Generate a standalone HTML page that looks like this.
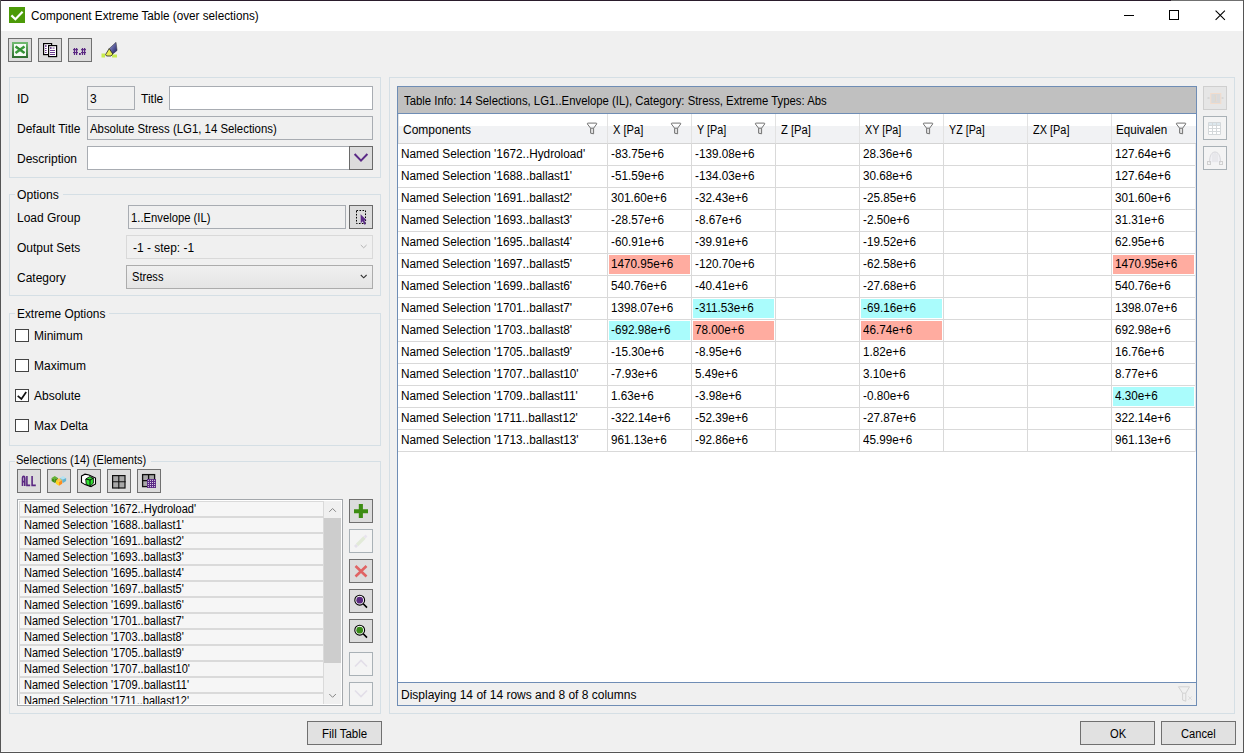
<!DOCTYPE html>
<html><head><meta charset="utf-8"><style>
html,body{margin:0;padding:0;width:1244px;height:753px;overflow:hidden;background:#f0f0f0}
body div{position:absolute}
.t{font-family:"Liberation Sans",sans-serif;line-height:16px;white-space:nowrap;color:#000}
</style></head><body>
<div style="left:0px;top:0px;width:1244px;height:753px;background:#f0f0f0"></div>
<div style="left:1px;top:1px;width:1242px;height:30px;background:#fff"></div>
<div style="left:0px;top:0px;width:1171px;height:1px;background:#2a1c2c"></div>
<div style="left:1171px;top:0px;width:73px;height:1px;background:#707070"></div>
<div style="left:0px;top:0px;width:1px;height:753px;background:#555"></div>
<div style="left:1243px;top:0px;width:1px;height:753px;background:#555"></div>
<div style="left:0px;top:752px;width:1244px;height:1px;background:#555"></div>
<div style="left:1px;top:751px;width:1242px;height:1px;background:#f8f8f8"></div>
<svg style="position:absolute;left:9px;top:7px" width="16" height="16" viewBox="0 0 16 16"><rect width="16" height="16" fill="#4c9a08"/><path d="M2.4 8.4 L6.4 12.3 L13.6 4.8" stroke="#fff" stroke-width="2.2" fill="none"/></svg>
<div class="t" style="left:30.50px;top:8px;font-size:12px;transform:scaleX(0.9764);transform-origin:0 0;">Component Extreme Table (over selections)</div>
<div style="left:1124px;top:15px;width:10px;height:1px;background:#000"></div>
<div style="left:1169px;top:10px;width:10px;height:10px;border:1px solid #000;box-sizing:border-box"></div>
<svg style="position:absolute;left:1215px;top:10px" width="11" height="11" viewBox="0 0 11 11"><path d="M0.6 0.6 L9.9 9.9 M9.9 0.6 L0.6 9.9" stroke="#000" stroke-width="1.1"/></svg>
<div style="left:8px;top:38px;width:24px;height:24px;background:#dcdcdc;border:1px solid #707070;box-sizing:border-box"></div>
<div style="left:38px;top:38px;width:24px;height:24px;background:#dcdcdc;border:1px solid #707070;box-sizing:border-box"></div>
<div style="left:68px;top:38px;width:24px;height:24px;background:#dcdcdc;border:1px solid #707070;box-sizing:border-box"></div>
<svg style="position:absolute;left:8px;top:38px" width="24" height="24" viewBox="0 0 24 24"><defs><linearGradient id="xg" x1="0" y1="0" x2="0" y2="1"><stop offset="0" stop-color="#6fb86f"/><stop offset="1" stop-color="#2f6f2f"/></linearGradient></defs><rect x="5" y="5" width="14" height="14" fill="#f6fbf6" stroke="url(#xg)" stroke-width="2"/><path d="M7.5 8.5 L16.5 15 M16.5 8.5 L7.5 15" stroke="#3a9a3a" stroke-width="2.6"/><path d="M8 8 L17 15" stroke="#1f6f1f" stroke-width="0.8" opacity="0.6"/></svg>
<svg style="position:absolute;left:38px;top:38px" width="24" height="24" viewBox="0 0 24 24"><rect x="5.6" y="5.6" width="8" height="11" fill="#fff" stroke="#000" stroke-width="1.2"/><rect x="10.6" y="7.6" width="8" height="11" fill="#fff" stroke="#000" stroke-width="1.2"/><g fill="#5a2782"><rect x="7" y="7.2" width="1.6" height="1.6"/><rect x="7" y="10" width="1.6" height="0.9"/><rect x="7" y="12" width="1.6" height="0.9"/><rect x="7" y="14" width="1.6" height="0.9"/><rect x="12" y="9.2" width="1.6" height="1.6"/><rect x="14.6" y="9.6" width="2" height="0.9"/><rect x="12" y="12" width="5" height="0.9"/><rect x="12" y="14" width="5" height="0.9"/><rect x="12" y="16" width="5" height="0.9"/></g></svg>
<svg style="position:absolute;left:68px;top:38px" width="24" height="24" viewBox="0 0 24 24"><g fill="#5a2782"><rect x="5.9" y="10" width="1.2" height="7"/><rect x="8" y="10" width="1.2" height="7"/><rect x="5" y="11.1" width="5" height="1.1"/><rect x="5" y="14" width="5" height="1.1"/><rect x="11" y="15" width="1.8" height="2"/><rect x="13.9" y="10" width="1.2" height="7"/><rect x="16" y="10" width="1.2" height="7"/><rect x="13" y="11.1" width="5" height="1.1"/><rect x="13" y="14" width="5" height="1.1"/></g></svg>
<svg style="position:absolute;left:100px;top:40px" width="20" height="20" viewBox="0 0 20 20"><defs><linearGradient id="hg" x1="0" y1="0" x2="1" y2="1"><stop offset="0" stop-color="#9aa0d8"/><stop offset="1" stop-color="#1a1a60"/></linearGradient></defs><rect x="1.5" y="13.5" width="3.5" height="4" fill="#c8ec50"/><rect x="12" y="14.5" width="5" height="3" fill="#c8ec50"/><path d="M16 2.3 L17.1 10.4 L12.8 14 L9.2 8.6 Z" fill="url(#hg)" stroke="#333" stroke-width="0.5"/><path d="M9.2 8.6 L12.8 14 L11 16 L6.5 16 L5.6 14.5 Z" fill="#e8ee50" stroke="#222" stroke-width="0.8"/></svg>
<div style="left:9px;top:77px;width:372px;height:101px;border:1px solid #d5dfe5;box-sizing:border-box"></div>
<div class="t" style="left:17.00px;top:91px;font-size:12px;">ID</div>
<div style="left:87px;top:86px;width:48px;height:24px;background:#f0f0f0;border:1px solid #a8acb2;box-sizing:border-box"></div>
<div class="t" style="left:90.00px;top:91px;font-size:12px;">3</div>
<div class="t" style="left:141.00px;top:91px;font-size:12px;">Title</div>
<div style="left:169px;top:86px;width:204px;height:24px;background:#fff;border:1px solid #a8acb2;box-sizing:border-box"></div>
<div class="t" style="left:17.00px;top:121px;font-size:12px;">Default Title</div>
<div style="left:87px;top:116px;width:286px;height:24px;background:#f0f0f0;border:1px solid #a8acb2;box-sizing:border-box"></div>
<div class="t" style="left:90.20px;top:121px;font-size:12px;transform:scaleX(0.9490);transform-origin:0 0;">Absolute Stress (LG1, 14 Selections)</div>
<div class="t" style="left:17.00px;top:151px;font-size:12px;">Description</div>
<div style="left:87px;top:146px;width:263px;height:24px;background:#fff;border:1px solid #a8acb2;box-sizing:border-box"></div>
<div style="left:349px;top:146px;width:24px;height:24px;background:#dcdcdc;border:1px solid #6a6a6a;box-sizing:border-box"></div>
<svg style="position:absolute;left:349px;top:146px" width="24" height="24" viewBox="0 0 24 24"><path d="M5.6 8 L12 14.6 L18.4 8" stroke="#5b2a86" stroke-width="2" fill="none"/></svg>
<div style="left:9px;top:194px;width:372px;height:102px;border:1px solid #d5dfe5;box-sizing:border-box"></div>
<div style="left:15px;top:192px;width:48px;height:5px;background:#f0f0f0"></div>
<div class="t" style="left:17.20px;top:187px;font-size:12px;transform:scaleX(1.0146);transform-origin:0 0;">Options</div>
<div class="t" style="left:17.00px;top:210px;font-size:12px;">Load Group</div>
<div style="left:128px;top:205px;width:218px;height:24px;background:#f0f0f0;border:1px solid #a8acb2;box-sizing:border-box"></div>
<div class="t" style="left:130.66px;top:210px;font-size:12px;transform:scaleX(0.9386);transform-origin:0 0;">1..Envelope (IL)</div>
<div style="left:349px;top:205px;width:24px;height:24px;background:#dcdcdc;border:1px solid #6a6a6a;box-sizing:border-box"></div>
<svg style="position:absolute;left:349px;top:205px" width="24" height="24" viewBox="0 0 24 24"><rect x="7.5" y="5.5" width="9" height="13" fill="none" stroke="#000" stroke-dasharray="1.6,1.4"/><path d="M11.6 9.2 L17.6 15.3 L15.2 15.5 L17 19 L15.4 19.7 L13.7 16.3 L11.8 18.2 Z" fill="#5b2a86"/></svg>
<div class="t" style="left:17.00px;top:240px;font-size:12px;">Output Sets</div>
<div style="left:126px;top:235px;width:247px;height:24px;background:#f0f0f0;border:1px solid #d9d9d9;box-sizing:border-box"></div>
<div class="t" style="left:132.80px;top:240px;font-size:12px;transform:scaleX(0.9951);transform-origin:0 0;">-1 - step: -1</div>
<svg style="position:absolute;left:355px;top:235px" width="18" height="24" viewBox="0 0 18 24"><path d="M5.8 10 L8.7 12.8 L11.6 10" stroke="#b4b4b4" stroke-width="1" fill="none"/></svg>
<div class="t" style="left:17.00px;top:270px;font-size:12px;">Category</div>
<div style="left:126px;top:265px;width:247px;height:24px;background:linear-gradient(#f0f0f0,#e5e5e5);border:1px solid #acacac;box-sizing:border-box"></div>
<div class="t" style="left:131.58px;top:269px;font-size:12px;transform:scaleX(0.9242);transform-origin:0 0;">Stress</div>
<svg style="position:absolute;left:355px;top:265px" width="18" height="24" viewBox="0 0 18 24"><path d="M5.8 10 L8.7 12.8 L11.6 10" stroke="#333" stroke-width="1.1" fill="none"/></svg>
<div style="left:9px;top:313px;width:372px;height:133px;border:1px solid #d5dfe5;box-sizing:border-box"></div>
<div style="left:15px;top:311px;width:94px;height:5px;background:#f0f0f0"></div>
<div class="t" style="left:16.51px;top:306px;font-size:12px;transform:scaleX(0.9886);transform-origin:0 0;">Extreme Options</div>
<div style="left:15px;top:329px;width:14px;height:13px;background:#fff;border:1px solid #444;box-sizing:border-box"></div>
<div class="t" style="left:34.00px;top:328px;font-size:12px;">Minimum</div>
<div style="left:15px;top:359px;width:14px;height:13px;background:#fff;border:1px solid #444;box-sizing:border-box"></div>
<div class="t" style="left:34.00px;top:358px;font-size:12px;">Maximum</div>
<div style="left:15px;top:389px;width:14px;height:13px;background:#fff;border:1px solid #444;box-sizing:border-box"></div>
<div class="t" style="left:34.00px;top:388px;font-size:12px;">Absolute</div>
<div style="left:15px;top:419px;width:14px;height:13px;background:#fff;border:1px solid #444;box-sizing:border-box"></div>
<div class="t" style="left:34.00px;top:418px;font-size:12px;">Max Delta</div>
<svg style="position:absolute;left:15px;top:389px" width="14" height="13" viewBox="0 0 14 13"><path d="M2.7 6.9 L6.4 10 L11.2 3" stroke="#111" stroke-width="1.7" fill="none"/></svg>
<div style="left:9px;top:461px;width:372px;height:253px;border:1px solid #d5dfe5;box-sizing:border-box"></div>
<div style="left:15px;top:459px;width:136px;height:5px;background:#f0f0f0"></div>
<div class="t" style="left:16.18px;top:452px;font-size:12px;transform:scaleX(0.9214);transform-origin:0 0;">Selections (14) (Elements)</div>
<div style="left:17px;top:469px;width:24px;height:24px;background:#dcdcdc;border:1px solid #707070;box-sizing:border-box"></div>
<div style="left:47px;top:469px;width:24px;height:24px;background:#dcdcdc;border:1px solid #707070;box-sizing:border-box"></div>
<div style="left:77px;top:469px;width:24px;height:24px;background:#dcdcdc;border:1px solid #707070;box-sizing:border-box"></div>
<div style="left:107px;top:469px;width:24px;height:24px;background:#dcdcdc;border:1px solid #707070;box-sizing:border-box"></div>
<div style="left:137px;top:469px;width:24px;height:24px;background:#dcdcdc;border:1px solid #707070;box-sizing:border-box"></div>
<svg style="position:absolute;left:17px;top:469px" width="24" height="24" viewBox="0 0 24 24"><path d="M5.5 17 V9.6 Q5.5 7.4 6.65 7.4 Q7.8 7.4 7.8 9.6 V17 M5.5 12.6 H7.8 M9.9 7 V16.35 H13.2 M15.1 7 V16.35 H18.8" stroke="#5a2782" stroke-width="1.6" fill="none"/></svg>
<svg style="position:absolute;left:47px;top:469px" width="24" height="24" viewBox="0 0 24 24"><polygon points="7.75,7.00 10.85,8.89 7.75,10.50 4.65,8.89" fill="#62b332"/><polygon points="4.65,8.89 7.75,10.50 7.75,14.00 4.65,12.11" fill="#3d8f14"/><polygon points="7.75,10.50 10.85,8.89 10.85,12.11 7.75,14.00" fill="#2f7d0a"/><polygon points="16.00,7.00 19.10,8.89 16.00,10.50 12.90,8.89" fill="#b4e2f2"/><polygon points="12.90,8.89 16.00,10.50 16.00,14.00 12.90,12.11" fill="#74c4de"/><polygon points="16.00,10.50 19.10,8.89 19.10,12.11 16.00,14.00" fill="#5fb4d2"/><polygon points="12.00,9.30 15.20,11.30 12.00,13.00 8.80,11.30" fill="#ffc34a"/><polygon points="8.80,11.30 12.00,13.00 12.00,16.70 8.80,14.70" fill="#ffd21e"/><polygon points="12.00,13.00 15.20,11.30 15.20,14.70 12.00,16.70" fill="#ff8c1e"/></svg>
<svg style="position:absolute;left:77px;top:469px" width="24" height="24" viewBox="0 0 24 24"><polygon points="4.5,7 8,5.2 12,6 18.5,9 18.5,15 14,17.6 8,15.6 4.5,13.5" fill="#fff" stroke="#000" stroke-width="1.1"/><polygon points="8.7,10 12.8,7.6 16.4,9.2 16.4,14.2 13,17.2 9.2,15.2" fill="#30e030" stroke="#000" stroke-width="0.8"/><path d="M9 10 L13 11 L16.4 9.2 M13 11 V17.2" stroke="#000" stroke-width="0.9" fill="none"/></svg>
<svg style="position:absolute;left:107px;top:469px" width="24" height="24" viewBox="0 0 24 24"><rect x="5.6" y="6.6" width="12.4" height="12.4" fill="#a8a8a8" stroke="#111" stroke-width="1.2"/><path d="M11.8 6 V19.6 M5 12.8 H18.6" stroke="#111" stroke-width="1.1"/></svg>
<svg style="position:absolute;left:137px;top:469px" width="24" height="24" viewBox="0 0 24 24"><rect x="5.6" y="5.6" width="12" height="12" fill="#a8a8a8" stroke="#111" stroke-width="1.3"/><path d="M11.6 5 V18 M5 11.6 H18" stroke="#111" stroke-width="1.3"/><rect x="10" y="10" width="9" height="9" fill="#5b2a86"/><rect x="10.90" y="10.90" width="0.9" height="0.9" fill="#fff"/><rect x="10.90" y="13.00" width="0.9" height="0.9" fill="#fff"/><rect x="10.90" y="15.10" width="0.9" height="0.9" fill="#fff"/><rect x="10.90" y="17.20" width="0.9" height="0.9" fill="#fff"/><rect x="13.00" y="10.90" width="0.9" height="0.9" fill="#fff"/><rect x="13.00" y="13.00" width="0.9" height="0.9" fill="#fff"/><rect x="13.00" y="15.10" width="0.9" height="0.9" fill="#fff"/><rect x="13.00" y="17.20" width="0.9" height="0.9" fill="#fff"/><rect x="15.10" y="10.90" width="0.9" height="0.9" fill="#fff"/><rect x="15.10" y="13.00" width="0.9" height="0.9" fill="#fff"/><rect x="15.10" y="15.10" width="0.9" height="0.9" fill="#fff"/><rect x="15.10" y="17.20" width="0.9" height="0.9" fill="#fff"/><rect x="17.20" y="10.90" width="0.9" height="0.9" fill="#fff"/><rect x="17.20" y="13.00" width="0.9" height="0.9" fill="#fff"/><rect x="17.20" y="15.10" width="0.9" height="0.9" fill="#fff"/><rect x="17.20" y="17.20" width="0.9" height="0.9" fill="#fff"/></svg>
<div style="left:17px;top:499px;width:326px;height:207px;background:#fff;border:1px solid #a3a7ab;box-sizing:border-box"></div>
<div style="left:18px;top:500px;width:323px;height:204px;overflow:hidden;background:#fff">
<div style="left:1px;top:1px;width:303px;height:14px;background:#f6f6f6;border:1px solid #dadada"></div>
<div class="t" style="left:5.8px;top:1px;font-size:12px;transform:scaleX(0.918);transform-origin:0 0">Named Selection '1672..Hydroload'</div>
<div style="left:1px;top:17px;width:303px;height:14px;background:#f6f6f6;border:1px solid #dadada"></div>
<div class="t" style="left:5.8px;top:17px;font-size:12px;transform:scaleX(0.918);transform-origin:0 0">Named Selection '1688..ballast1'</div>
<div style="left:1px;top:33px;width:303px;height:14px;background:#f6f6f6;border:1px solid #dadada"></div>
<div class="t" style="left:5.8px;top:33px;font-size:12px;transform:scaleX(0.918);transform-origin:0 0">Named Selection '1691..ballast2'</div>
<div style="left:1px;top:49px;width:303px;height:14px;background:#f6f6f6;border:1px solid #dadada"></div>
<div class="t" style="left:5.8px;top:49px;font-size:12px;transform:scaleX(0.918);transform-origin:0 0">Named Selection '1693..ballast3'</div>
<div style="left:1px;top:65px;width:303px;height:14px;background:#f6f6f6;border:1px solid #dadada"></div>
<div class="t" style="left:5.8px;top:65px;font-size:12px;transform:scaleX(0.918);transform-origin:0 0">Named Selection '1695..ballast4'</div>
<div style="left:1px;top:81px;width:303px;height:14px;background:#f6f6f6;border:1px solid #dadada"></div>
<div class="t" style="left:5.8px;top:81px;font-size:12px;transform:scaleX(0.918);transform-origin:0 0">Named Selection '1697..ballast5'</div>
<div style="left:1px;top:97px;width:303px;height:14px;background:#f6f6f6;border:1px solid #dadada"></div>
<div class="t" style="left:5.8px;top:97px;font-size:12px;transform:scaleX(0.918);transform-origin:0 0">Named Selection '1699..ballast6'</div>
<div style="left:1px;top:113px;width:303px;height:14px;background:#f6f6f6;border:1px solid #dadada"></div>
<div class="t" style="left:5.8px;top:113px;font-size:12px;transform:scaleX(0.918);transform-origin:0 0">Named Selection '1701..ballast7'</div>
<div style="left:1px;top:129px;width:303px;height:14px;background:#f6f6f6;border:1px solid #dadada"></div>
<div class="t" style="left:5.8px;top:129px;font-size:12px;transform:scaleX(0.918);transform-origin:0 0">Named Selection '1703..ballast8'</div>
<div style="left:1px;top:145px;width:303px;height:14px;background:#f6f6f6;border:1px solid #dadada"></div>
<div class="t" style="left:5.8px;top:145px;font-size:12px;transform:scaleX(0.918);transform-origin:0 0">Named Selection '1705..ballast9'</div>
<div style="left:1px;top:161px;width:303px;height:14px;background:#f6f6f6;border:1px solid #dadada"></div>
<div class="t" style="left:5.8px;top:161px;font-size:12px;transform:scaleX(0.918);transform-origin:0 0">Named Selection '1707..ballast10'</div>
<div style="left:1px;top:177px;width:303px;height:14px;background:#f6f6f6;border:1px solid #dadada"></div>
<div class="t" style="left:5.8px;top:177px;font-size:12px;transform:scaleX(0.918);transform-origin:0 0">Named Selection '1709..ballast11'</div>
<div style="left:1px;top:193px;width:303px;height:14px;background:#f6f6f6;border:1px solid #dadada"></div>
<div class="t" style="left:5.8px;top:193px;font-size:12px;transform:scaleX(0.918);transform-origin:0 0">Named Selection '1711..ballast12'</div>
</div>
<div style="left:324px;top:501px;width:17px;height:203px;background:#f0f0f0"></div>
<div style="left:324px;top:518px;width:17px;height:145px;background:#cdcdcd"></div>
<svg style="position:absolute;left:324px;top:501px" width="17" height="17" viewBox="0 0 17 17"><path d="M5.3 10.8 L8.6 7.5 L11.9 10.8" stroke="#858585" stroke-width="1" fill="none"/></svg>
<svg style="position:absolute;left:324px;top:687px" width="17" height="17" viewBox="0 0 17 17"><path d="M5.3 7 L8.6 10.3 L11.9 7" stroke="#858585" stroke-width="1" fill="none"/></svg>
<div style="left:349px;top:499px;width:24px;height:24px;background:#dcdcdc;border:1px solid #707070;box-sizing:border-box"></div>
<svg style="position:absolute;left:349px;top:499px" width="24" height="24" viewBox="0 0 24 24"><path d="M9.8 5 H13.9 V10.2 H19 V14.2 H13.9 V18.9 H9.8 V14.2 H5 V10.2 H9.8 Z" fill="#3c8c12"/></svg>
<div style="left:349px;top:529px;width:24px;height:24px;background:#f4f4f4;border:1px solid #a9b1b6;box-sizing:border-box"></div>
<svg style="position:absolute;left:349px;top:529px" width="24" height="24" viewBox="0 0 24 24"><path d="M8 16 L15.5 8.5" stroke="#e2ead8" stroke-width="3.2"/><path d="M6 18 L8 16" stroke="#e4e0ea" stroke-width="3"/><path d="M15.5 8.5 L17.5 6.5" stroke="#e8e4ee" stroke-width="2.6"/></svg>
<div style="left:349px;top:559px;width:24px;height:24px;background:#dcdcdc;border:1px solid #707070;box-sizing:border-box"></div>
<svg style="position:absolute;left:349px;top:559px" width="24" height="24" viewBox="0 0 24 24"><path d="M6.5 7 L17.5 17.5 M17.5 7 L6.5 17.5" stroke="#e06464" stroke-width="2.6"/></svg>
<div style="left:349px;top:589px;width:24px;height:24px;background:#dcdcdc;border:1px solid #707070;box-sizing:border-box"></div>
<svg style="position:absolute;left:349px;top:589px" width="24" height="24" viewBox="0 0 24 24"><circle cx="10.7" cy="11.2" r="4.9" fill="#fff" stroke="#000" stroke-width="1.1"/><circle cx="10.7" cy="11.2" r="3.4" fill="#5a2a7e"/><path d="M14.2 14.7 L18 18.6" stroke="#000" stroke-width="1.6"/></svg>
<div style="left:349px;top:619px;width:24px;height:24px;background:#dcdcdc;border:1px solid #707070;box-sizing:border-box"></div>
<svg style="position:absolute;left:349px;top:619px" width="24" height="24" viewBox="0 0 24 24"><circle cx="10.7" cy="11.2" r="4.9" fill="#fff" stroke="#000" stroke-width="1.1"/><circle cx="10.7" cy="11.2" r="3.4" fill="#3a8a1a"/><path d="M14.2 14.7 L18 18.6" stroke="#000" stroke-width="1.6"/></svg>
<div style="left:349px;top:652px;width:24px;height:24px;background:#f4f4f4;border:1px solid #a9b1b6;box-sizing:border-box"></div>
<svg style="position:absolute;left:349px;top:652px" width="24" height="24" viewBox="0 0 24 24"><path d="M6 14.5 L12 8.5 L18 14.5" stroke="#e2dee8" stroke-width="1.6" fill="none"/></svg>
<div style="left:349px;top:682px;width:24px;height:24px;background:#f4f4f4;border:1px solid #a9b1b6;box-sizing:border-box"></div>
<svg style="position:absolute;left:349px;top:682px" width="24" height="24" viewBox="0 0 24 24"><path d="M6 8.5 L12 14.5 L18 8.5" stroke="#e2dee8" stroke-width="1.6" fill="none"/></svg>
<div style="left:307px;top:721px;width:75px;height:24px;background:#e1e1e1;border:1px solid #707070;box-sizing:border-box"></div>
<div class="t" style="left:321.84px;top:726px;font-size:12px;transform:scaleX(0.9587);transform-origin:0 0;">Fill Table</div>
<div style="left:389px;top:77px;width:846px;height:637px;border:1px solid #d5dfe5;box-sizing:border-box"></div>
<div style="left:397px;top:86px;width:800px;height:620px;background:#fff;border:1px solid #6f8db5;box-sizing:border-box"></div>
<div style="left:398px;top:87px;width:798px;height:26px;background:#c0c0c0"></div>
<div style="left:398px;top:113px;width:798px;height:1px;background:#6f8db5"></div>
<div class="t" style="left:403.60px;top:93px;font-size:12px;transform:scaleX(0.9450);transform-origin:0 0;">Table Info: 14 Selections, LG1..Envelope (IL), Category: Stress, Extreme Types: Abs</div>
<div style="left:398px;top:126px;width:798px;height:17px;background:#f1f2f4"></div>
<div style="left:398px;top:143px;width:798px;height:1px;background:#d4d4d4"></div>
<div style="left:398px;top:114px;width:1px;height:29px;background:#e4e4e4"></div>
<div style="left:607px;top:114px;width:1px;height:29px;background:#e2e2e2"></div>
<div style="left:691px;top:114px;width:1px;height:29px;background:#e2e2e2"></div>
<div style="left:775px;top:114px;width:1px;height:29px;background:#e2e2e2"></div>
<div style="left:859px;top:114px;width:1px;height:29px;background:#e2e2e2"></div>
<div style="left:943px;top:114px;width:1px;height:29px;background:#e2e2e2"></div>
<div style="left:1027px;top:114px;width:1px;height:29px;background:#e2e2e2"></div>
<div style="left:1111px;top:114px;width:1px;height:29px;background:#e2e2e2"></div>
<div class="t" style="left:403.00px;top:122px;font-size:12px;">Components</div>
<svg style="position:absolute;left:586px;top:122px" width="12" height="13" viewBox="0 0 12 13"><path d="M4.6 6.3 H7.6 V11.8 L4.6 11.2 Z" fill="#e2e2e2"/><path d="M1.4 2 Q1 1.1 2.1 1.1 H10 Q11.1 1.1 10.7 2 L7.6 6.2 V11.8 L4.6 11.2 V6.2 Z M4.6 6.2 H7.6" fill="none" stroke="#737373" stroke-width="1"/></svg>
<div class="t" style="left:612.80px;top:122px;font-size:12px;transform:scaleX(0.9281);transform-origin:0 0;">X [Pa]</div>
<svg style="position:absolute;left:670px;top:122px" width="12" height="13" viewBox="0 0 12 13"><path d="M4.6 6.3 H7.6 V11.8 L4.6 11.2 Z" fill="#e2e2e2"/><path d="M1.4 2 Q1 1.1 2.1 1.1 H10 Q11.1 1.1 10.7 2 L7.6 6.2 V11.8 L4.6 11.2 V6.2 Z M4.6 6.2 H7.6" fill="none" stroke="#737373" stroke-width="1"/></svg>
<div class="t" style="left:697.30px;top:122px;font-size:12px;transform:scaleX(0.8969);transform-origin:0 0;">Y [Pa]</div>
<svg style="position:absolute;left:754px;top:122px" width="12" height="13" viewBox="0 0 12 13"><path d="M4.6 6.3 H7.6 V11.8 L4.6 11.2 Z" fill="#e2e2e2"/><path d="M1.4 2 Q1 1.1 2.1 1.1 H10 Q11.1 1.1 10.7 2 L7.6 6.2 V11.8 L4.6 11.2 V6.2 Z M4.6 6.2 H7.6" fill="none" stroke="#737373" stroke-width="1"/></svg>
<div class="t" style="left:780.90px;top:122px;font-size:12px;transform:scaleX(0.9344);transform-origin:0 0;">Z [Pa]</div>
<div class="t" style="left:865.10px;top:122px;font-size:12px;transform:scaleX(0.8975);transform-origin:0 0;">XY [Pa]</div>
<svg style="position:absolute;left:922px;top:122px" width="12" height="13" viewBox="0 0 12 13"><path d="M4.6 6.3 H7.6 V11.8 L4.6 11.2 Z" fill="#e2e2e2"/><path d="M1.4 2 Q1 1.1 2.1 1.1 H10 Q11.1 1.1 10.7 2 L7.6 6.2 V11.8 L4.6 11.2 V6.2 Z M4.6 6.2 H7.6" fill="none" stroke="#737373" stroke-width="1"/></svg>
<div class="t" style="left:949.20px;top:122px;font-size:12px;transform:scaleX(0.8925);transform-origin:0 0;">YZ [Pa]</div>
<div class="t" style="left:1033.00px;top:122px;font-size:12px;transform:scaleX(0.9100);transform-origin:0 0;">ZX [Pa]</div>
<div class="t" style="left:1115.93px;top:122px;font-size:12px;transform:scaleX(0.9706);transform-origin:0 0;">Equivalen</div>
<svg style="position:absolute;left:1175px;top:122px" width="12" height="13" viewBox="0 0 12 13"><path d="M4.6 6.3 H7.6 V11.8 L4.6 11.2 Z" fill="#e2e2e2"/><path d="M1.4 2 Q1 1.1 2.1 1.1 H10 Q11.1 1.1 10.7 2 L7.6 6.2 V11.8 L4.6 11.2 V6.2 Z M4.6 6.2 H7.6" fill="none" stroke="#737373" stroke-width="1"/></svg>
<div style="left:398px;top:165px;width:797px;height:1px;background:#d9d9d9"></div>
<div class="t" style="left:401.00px;top:146px;font-size:12px;transform:scaleX(0.9830);transform-origin:0 0;">Named Selection &#x27;1672..Hydroload&#x27;</div>
<div class="t" style="left:611.40px;top:146px;font-size:12px;transform:scaleX(0.9760);transform-origin:0 0;">-83.75e+6</div>
<div class="t" style="left:695.40px;top:146px;font-size:12px;transform:scaleX(0.9760);transform-origin:0 0;">-139.08e+6</div>
<div class="t" style="left:863.40px;top:146px;font-size:12px;transform:scaleX(0.9760);transform-origin:0 0;">28.36e+6</div>
<div class="t" style="left:1115.40px;top:146px;font-size:12px;transform:scaleX(0.9760);transform-origin:0 0;">127.64e+6</div>
<div style="left:607px;top:143px;width:1px;height:22px;background:#d9d9d9"></div>
<div style="left:691px;top:143px;width:1px;height:22px;background:#d9d9d9"></div>
<div style="left:775px;top:143px;width:1px;height:22px;background:#d9d9d9"></div>
<div style="left:859px;top:143px;width:1px;height:22px;background:#d9d9d9"></div>
<div style="left:943px;top:143px;width:1px;height:22px;background:#d9d9d9"></div>
<div style="left:1027px;top:143px;width:1px;height:22px;background:#d9d9d9"></div>
<div style="left:1111px;top:143px;width:1px;height:22px;background:#d9d9d9"></div>
<div style="left:398px;top:187px;width:797px;height:1px;background:#d9d9d9"></div>
<div class="t" style="left:401.00px;top:168px;font-size:12px;transform:scaleX(0.9830);transform-origin:0 0;">Named Selection &#x27;1688..ballast1&#x27;</div>
<div class="t" style="left:611.40px;top:168px;font-size:12px;transform:scaleX(0.9760);transform-origin:0 0;">-51.59e+6</div>
<div class="t" style="left:695.40px;top:168px;font-size:12px;transform:scaleX(0.9760);transform-origin:0 0;">-134.03e+6</div>
<div class="t" style="left:863.40px;top:168px;font-size:12px;transform:scaleX(0.9760);transform-origin:0 0;">30.68e+6</div>
<div class="t" style="left:1115.40px;top:168px;font-size:12px;transform:scaleX(0.9760);transform-origin:0 0;">127.64e+6</div>
<div style="left:607px;top:165px;width:1px;height:22px;background:#d9d9d9"></div>
<div style="left:691px;top:165px;width:1px;height:22px;background:#d9d9d9"></div>
<div style="left:775px;top:165px;width:1px;height:22px;background:#d9d9d9"></div>
<div style="left:859px;top:165px;width:1px;height:22px;background:#d9d9d9"></div>
<div style="left:943px;top:165px;width:1px;height:22px;background:#d9d9d9"></div>
<div style="left:1027px;top:165px;width:1px;height:22px;background:#d9d9d9"></div>
<div style="left:1111px;top:165px;width:1px;height:22px;background:#d9d9d9"></div>
<div style="left:398px;top:209px;width:797px;height:1px;background:#d9d9d9"></div>
<div class="t" style="left:401.00px;top:190px;font-size:12px;transform:scaleX(0.9830);transform-origin:0 0;">Named Selection &#x27;1691..ballast2&#x27;</div>
<div class="t" style="left:611.40px;top:190px;font-size:12px;transform:scaleX(0.9760);transform-origin:0 0;">301.60e+6</div>
<div class="t" style="left:695.40px;top:190px;font-size:12px;transform:scaleX(0.9760);transform-origin:0 0;">-32.43e+6</div>
<div class="t" style="left:863.40px;top:190px;font-size:12px;transform:scaleX(0.9760);transform-origin:0 0;">-25.85e+6</div>
<div class="t" style="left:1115.40px;top:190px;font-size:12px;transform:scaleX(0.9760);transform-origin:0 0;">301.60e+6</div>
<div style="left:607px;top:187px;width:1px;height:22px;background:#d9d9d9"></div>
<div style="left:691px;top:187px;width:1px;height:22px;background:#d9d9d9"></div>
<div style="left:775px;top:187px;width:1px;height:22px;background:#d9d9d9"></div>
<div style="left:859px;top:187px;width:1px;height:22px;background:#d9d9d9"></div>
<div style="left:943px;top:187px;width:1px;height:22px;background:#d9d9d9"></div>
<div style="left:1027px;top:187px;width:1px;height:22px;background:#d9d9d9"></div>
<div style="left:1111px;top:187px;width:1px;height:22px;background:#d9d9d9"></div>
<div style="left:398px;top:231px;width:797px;height:1px;background:#d9d9d9"></div>
<div class="t" style="left:401.00px;top:212px;font-size:12px;transform:scaleX(0.9830);transform-origin:0 0;">Named Selection &#x27;1693..ballast3&#x27;</div>
<div class="t" style="left:611.40px;top:212px;font-size:12px;transform:scaleX(0.9760);transform-origin:0 0;">-28.57e+6</div>
<div class="t" style="left:695.40px;top:212px;font-size:12px;transform:scaleX(0.9760);transform-origin:0 0;">-8.67e+6</div>
<div class="t" style="left:863.40px;top:212px;font-size:12px;transform:scaleX(0.9760);transform-origin:0 0;">-2.50e+6</div>
<div class="t" style="left:1115.40px;top:212px;font-size:12px;transform:scaleX(0.9760);transform-origin:0 0;">31.31e+6</div>
<div style="left:607px;top:209px;width:1px;height:22px;background:#d9d9d9"></div>
<div style="left:691px;top:209px;width:1px;height:22px;background:#d9d9d9"></div>
<div style="left:775px;top:209px;width:1px;height:22px;background:#d9d9d9"></div>
<div style="left:859px;top:209px;width:1px;height:22px;background:#d9d9d9"></div>
<div style="left:943px;top:209px;width:1px;height:22px;background:#d9d9d9"></div>
<div style="left:1027px;top:209px;width:1px;height:22px;background:#d9d9d9"></div>
<div style="left:1111px;top:209px;width:1px;height:22px;background:#d9d9d9"></div>
<div style="left:398px;top:253px;width:797px;height:1px;background:#d9d9d9"></div>
<div class="t" style="left:401.00px;top:234px;font-size:12px;transform:scaleX(0.9830);transform-origin:0 0;">Named Selection &#x27;1695..ballast4&#x27;</div>
<div class="t" style="left:611.40px;top:234px;font-size:12px;transform:scaleX(0.9760);transform-origin:0 0;">-60.91e+6</div>
<div class="t" style="left:695.40px;top:234px;font-size:12px;transform:scaleX(0.9760);transform-origin:0 0;">-39.91e+6</div>
<div class="t" style="left:863.40px;top:234px;font-size:12px;transform:scaleX(0.9760);transform-origin:0 0;">-19.52e+6</div>
<div class="t" style="left:1115.40px;top:234px;font-size:12px;transform:scaleX(0.9760);transform-origin:0 0;">62.95e+6</div>
<div style="left:607px;top:231px;width:1px;height:22px;background:#d9d9d9"></div>
<div style="left:691px;top:231px;width:1px;height:22px;background:#d9d9d9"></div>
<div style="left:775px;top:231px;width:1px;height:22px;background:#d9d9d9"></div>
<div style="left:859px;top:231px;width:1px;height:22px;background:#d9d9d9"></div>
<div style="left:943px;top:231px;width:1px;height:22px;background:#d9d9d9"></div>
<div style="left:1027px;top:231px;width:1px;height:22px;background:#d9d9d9"></div>
<div style="left:1111px;top:231px;width:1px;height:22px;background:#d9d9d9"></div>
<div style="left:398px;top:275px;width:797px;height:1px;background:#d9d9d9"></div>
<div class="t" style="left:401.00px;top:256px;font-size:12px;transform:scaleX(0.9830);transform-origin:0 0;">Named Selection &#x27;1697..ballast5&#x27;</div>
<div style="left:609px;top:255px;width:81px;height:19px;background:#ffaca0"></div>
<div class="t" style="left:611.40px;top:256px;font-size:12px;transform:scaleX(0.9760);transform-origin:0 0;">1470.95e+6</div>
<div class="t" style="left:695.40px;top:256px;font-size:12px;transform:scaleX(0.9760);transform-origin:0 0;">-120.70e+6</div>
<div class="t" style="left:863.40px;top:256px;font-size:12px;transform:scaleX(0.9760);transform-origin:0 0;">-62.58e+6</div>
<div style="left:1113px;top:255px;width:81px;height:19px;background:#ffaca0"></div>
<div class="t" style="left:1115.40px;top:256px;font-size:12px;transform:scaleX(0.9760);transform-origin:0 0;">1470.95e+6</div>
<div style="left:607px;top:253px;width:1px;height:22px;background:#d9d9d9"></div>
<div style="left:691px;top:253px;width:1px;height:22px;background:#d9d9d9"></div>
<div style="left:775px;top:253px;width:1px;height:22px;background:#d9d9d9"></div>
<div style="left:859px;top:253px;width:1px;height:22px;background:#d9d9d9"></div>
<div style="left:943px;top:253px;width:1px;height:22px;background:#d9d9d9"></div>
<div style="left:1027px;top:253px;width:1px;height:22px;background:#d9d9d9"></div>
<div style="left:1111px;top:253px;width:1px;height:22px;background:#d9d9d9"></div>
<div style="left:398px;top:297px;width:797px;height:1px;background:#d9d9d9"></div>
<div class="t" style="left:401.00px;top:278px;font-size:12px;transform:scaleX(0.9830);transform-origin:0 0;">Named Selection &#x27;1699..ballast6&#x27;</div>
<div class="t" style="left:611.40px;top:278px;font-size:12px;transform:scaleX(0.9760);transform-origin:0 0;">540.76e+6</div>
<div class="t" style="left:695.40px;top:278px;font-size:12px;transform:scaleX(0.9760);transform-origin:0 0;">-40.41e+6</div>
<div class="t" style="left:863.40px;top:278px;font-size:12px;transform:scaleX(0.9760);transform-origin:0 0;">-27.68e+6</div>
<div class="t" style="left:1115.40px;top:278px;font-size:12px;transform:scaleX(0.9760);transform-origin:0 0;">540.76e+6</div>
<div style="left:607px;top:275px;width:1px;height:22px;background:#d9d9d9"></div>
<div style="left:691px;top:275px;width:1px;height:22px;background:#d9d9d9"></div>
<div style="left:775px;top:275px;width:1px;height:22px;background:#d9d9d9"></div>
<div style="left:859px;top:275px;width:1px;height:22px;background:#d9d9d9"></div>
<div style="left:943px;top:275px;width:1px;height:22px;background:#d9d9d9"></div>
<div style="left:1027px;top:275px;width:1px;height:22px;background:#d9d9d9"></div>
<div style="left:1111px;top:275px;width:1px;height:22px;background:#d9d9d9"></div>
<div style="left:398px;top:319px;width:797px;height:1px;background:#d9d9d9"></div>
<div class="t" style="left:401.00px;top:300px;font-size:12px;transform:scaleX(0.9830);transform-origin:0 0;">Named Selection &#x27;1701..ballast7&#x27;</div>
<div class="t" style="left:611.40px;top:300px;font-size:12px;transform:scaleX(0.9760);transform-origin:0 0;">1398.07e+6</div>
<div style="left:693px;top:299px;width:81px;height:19px;background:#aafcfc"></div>
<div class="t" style="left:695.40px;top:300px;font-size:12px;transform:scaleX(0.9760);transform-origin:0 0;">-311.53e+6</div>
<div style="left:861px;top:299px;width:81px;height:19px;background:#aafcfc"></div>
<div class="t" style="left:863.40px;top:300px;font-size:12px;transform:scaleX(0.9760);transform-origin:0 0;">-69.16e+6</div>
<div class="t" style="left:1115.40px;top:300px;font-size:12px;transform:scaleX(0.9760);transform-origin:0 0;">1398.07e+6</div>
<div style="left:607px;top:297px;width:1px;height:22px;background:#d9d9d9"></div>
<div style="left:691px;top:297px;width:1px;height:22px;background:#d9d9d9"></div>
<div style="left:775px;top:297px;width:1px;height:22px;background:#d9d9d9"></div>
<div style="left:859px;top:297px;width:1px;height:22px;background:#d9d9d9"></div>
<div style="left:943px;top:297px;width:1px;height:22px;background:#d9d9d9"></div>
<div style="left:1027px;top:297px;width:1px;height:22px;background:#d9d9d9"></div>
<div style="left:1111px;top:297px;width:1px;height:22px;background:#d9d9d9"></div>
<div style="left:398px;top:341px;width:797px;height:1px;background:#d9d9d9"></div>
<div class="t" style="left:401.00px;top:322px;font-size:12px;transform:scaleX(0.9830);transform-origin:0 0;">Named Selection &#x27;1703..ballast8&#x27;</div>
<div style="left:609px;top:321px;width:81px;height:19px;background:#aafcfc"></div>
<div class="t" style="left:611.40px;top:322px;font-size:12px;transform:scaleX(0.9760);transform-origin:0 0;">-692.98e+6</div>
<div style="left:693px;top:321px;width:81px;height:19px;background:#ffaca0"></div>
<div class="t" style="left:695.40px;top:322px;font-size:12px;transform:scaleX(0.9760);transform-origin:0 0;">78.00e+6</div>
<div style="left:861px;top:321px;width:81px;height:19px;background:#ffaca0"></div>
<div class="t" style="left:863.40px;top:322px;font-size:12px;transform:scaleX(0.9760);transform-origin:0 0;">46.74e+6</div>
<div class="t" style="left:1115.40px;top:322px;font-size:12px;transform:scaleX(0.9760);transform-origin:0 0;">692.98e+6</div>
<div style="left:607px;top:319px;width:1px;height:22px;background:#d9d9d9"></div>
<div style="left:691px;top:319px;width:1px;height:22px;background:#d9d9d9"></div>
<div style="left:775px;top:319px;width:1px;height:22px;background:#d9d9d9"></div>
<div style="left:859px;top:319px;width:1px;height:22px;background:#d9d9d9"></div>
<div style="left:943px;top:319px;width:1px;height:22px;background:#d9d9d9"></div>
<div style="left:1027px;top:319px;width:1px;height:22px;background:#d9d9d9"></div>
<div style="left:1111px;top:319px;width:1px;height:22px;background:#d9d9d9"></div>
<div style="left:398px;top:363px;width:797px;height:1px;background:#d9d9d9"></div>
<div class="t" style="left:401.00px;top:344px;font-size:12px;transform:scaleX(0.9830);transform-origin:0 0;">Named Selection &#x27;1705..ballast9&#x27;</div>
<div class="t" style="left:611.40px;top:344px;font-size:12px;transform:scaleX(0.9760);transform-origin:0 0;">-15.30e+6</div>
<div class="t" style="left:695.40px;top:344px;font-size:12px;transform:scaleX(0.9760);transform-origin:0 0;">-8.95e+6</div>
<div class="t" style="left:863.40px;top:344px;font-size:12px;transform:scaleX(0.9760);transform-origin:0 0;">1.82e+6</div>
<div class="t" style="left:1115.40px;top:344px;font-size:12px;transform:scaleX(0.9760);transform-origin:0 0;">16.76e+6</div>
<div style="left:607px;top:341px;width:1px;height:22px;background:#d9d9d9"></div>
<div style="left:691px;top:341px;width:1px;height:22px;background:#d9d9d9"></div>
<div style="left:775px;top:341px;width:1px;height:22px;background:#d9d9d9"></div>
<div style="left:859px;top:341px;width:1px;height:22px;background:#d9d9d9"></div>
<div style="left:943px;top:341px;width:1px;height:22px;background:#d9d9d9"></div>
<div style="left:1027px;top:341px;width:1px;height:22px;background:#d9d9d9"></div>
<div style="left:1111px;top:341px;width:1px;height:22px;background:#d9d9d9"></div>
<div style="left:398px;top:385px;width:797px;height:1px;background:#d9d9d9"></div>
<div class="t" style="left:401.00px;top:366px;font-size:12px;transform:scaleX(0.9830);transform-origin:0 0;">Named Selection &#x27;1707..ballast10&#x27;</div>
<div class="t" style="left:611.40px;top:366px;font-size:12px;transform:scaleX(0.9760);transform-origin:0 0;">-7.93e+6</div>
<div class="t" style="left:695.40px;top:366px;font-size:12px;transform:scaleX(0.9760);transform-origin:0 0;">5.49e+6</div>
<div class="t" style="left:863.40px;top:366px;font-size:12px;transform:scaleX(0.9760);transform-origin:0 0;">3.10e+6</div>
<div class="t" style="left:1115.40px;top:366px;font-size:12px;transform:scaleX(0.9760);transform-origin:0 0;">8.77e+6</div>
<div style="left:607px;top:363px;width:1px;height:22px;background:#d9d9d9"></div>
<div style="left:691px;top:363px;width:1px;height:22px;background:#d9d9d9"></div>
<div style="left:775px;top:363px;width:1px;height:22px;background:#d9d9d9"></div>
<div style="left:859px;top:363px;width:1px;height:22px;background:#d9d9d9"></div>
<div style="left:943px;top:363px;width:1px;height:22px;background:#d9d9d9"></div>
<div style="left:1027px;top:363px;width:1px;height:22px;background:#d9d9d9"></div>
<div style="left:1111px;top:363px;width:1px;height:22px;background:#d9d9d9"></div>
<div style="left:398px;top:407px;width:797px;height:1px;background:#d9d9d9"></div>
<div class="t" style="left:401.00px;top:388px;font-size:12px;transform:scaleX(0.9830);transform-origin:0 0;">Named Selection &#x27;1709..ballast11&#x27;</div>
<div class="t" style="left:611.40px;top:388px;font-size:12px;transform:scaleX(0.9760);transform-origin:0 0;">1.63e+6</div>
<div class="t" style="left:695.40px;top:388px;font-size:12px;transform:scaleX(0.9760);transform-origin:0 0;">-3.98e+6</div>
<div class="t" style="left:863.40px;top:388px;font-size:12px;transform:scaleX(0.9760);transform-origin:0 0;">-0.80e+6</div>
<div style="left:1113px;top:387px;width:81px;height:19px;background:#aafcfc"></div>
<div class="t" style="left:1115.40px;top:388px;font-size:12px;transform:scaleX(0.9760);transform-origin:0 0;">4.30e+6</div>
<div style="left:607px;top:385px;width:1px;height:22px;background:#d9d9d9"></div>
<div style="left:691px;top:385px;width:1px;height:22px;background:#d9d9d9"></div>
<div style="left:775px;top:385px;width:1px;height:22px;background:#d9d9d9"></div>
<div style="left:859px;top:385px;width:1px;height:22px;background:#d9d9d9"></div>
<div style="left:943px;top:385px;width:1px;height:22px;background:#d9d9d9"></div>
<div style="left:1027px;top:385px;width:1px;height:22px;background:#d9d9d9"></div>
<div style="left:1111px;top:385px;width:1px;height:22px;background:#d9d9d9"></div>
<div style="left:398px;top:429px;width:797px;height:1px;background:#d9d9d9"></div>
<div class="t" style="left:401.00px;top:410px;font-size:12px;transform:scaleX(0.9830);transform-origin:0 0;">Named Selection &#x27;1711..ballast12&#x27;</div>
<div class="t" style="left:611.40px;top:410px;font-size:12px;transform:scaleX(0.9760);transform-origin:0 0;">-322.14e+6</div>
<div class="t" style="left:695.40px;top:410px;font-size:12px;transform:scaleX(0.9760);transform-origin:0 0;">-52.39e+6</div>
<div class="t" style="left:863.40px;top:410px;font-size:12px;transform:scaleX(0.9760);transform-origin:0 0;">-27.87e+6</div>
<div class="t" style="left:1115.40px;top:410px;font-size:12px;transform:scaleX(0.9760);transform-origin:0 0;">322.14e+6</div>
<div style="left:607px;top:407px;width:1px;height:22px;background:#d9d9d9"></div>
<div style="left:691px;top:407px;width:1px;height:22px;background:#d9d9d9"></div>
<div style="left:775px;top:407px;width:1px;height:22px;background:#d9d9d9"></div>
<div style="left:859px;top:407px;width:1px;height:22px;background:#d9d9d9"></div>
<div style="left:943px;top:407px;width:1px;height:22px;background:#d9d9d9"></div>
<div style="left:1027px;top:407px;width:1px;height:22px;background:#d9d9d9"></div>
<div style="left:1111px;top:407px;width:1px;height:22px;background:#d9d9d9"></div>
<div style="left:398px;top:451px;width:797px;height:1px;background:#d9d9d9"></div>
<div class="t" style="left:401.00px;top:432px;font-size:12px;transform:scaleX(0.9830);transform-origin:0 0;">Named Selection &#x27;1713..ballast13&#x27;</div>
<div class="t" style="left:611.40px;top:432px;font-size:12px;transform:scaleX(0.9760);transform-origin:0 0;">961.13e+6</div>
<div class="t" style="left:695.40px;top:432px;font-size:12px;transform:scaleX(0.9760);transform-origin:0 0;">-92.86e+6</div>
<div class="t" style="left:863.40px;top:432px;font-size:12px;transform:scaleX(0.9760);transform-origin:0 0;">45.99e+6</div>
<div class="t" style="left:1115.40px;top:432px;font-size:12px;transform:scaleX(0.9760);transform-origin:0 0;">961.13e+6</div>
<div style="left:607px;top:429px;width:1px;height:22px;background:#d9d9d9"></div>
<div style="left:691px;top:429px;width:1px;height:22px;background:#d9d9d9"></div>
<div style="left:775px;top:429px;width:1px;height:22px;background:#d9d9d9"></div>
<div style="left:859px;top:429px;width:1px;height:22px;background:#d9d9d9"></div>
<div style="left:943px;top:429px;width:1px;height:22px;background:#d9d9d9"></div>
<div style="left:1027px;top:429px;width:1px;height:22px;background:#d9d9d9"></div>
<div style="left:1111px;top:429px;width:1px;height:22px;background:#d9d9d9"></div>
<div style="left:1195px;top:144px;width:1px;height:308px;background:#ebe8e6"></div>
<div style="left:398px;top:682px;width:798px;height:1px;background:#6f8db5"></div>
<div style="left:398px;top:683px;width:798px;height:22px;background:#f0f0f0"></div>
<div class="t" style="left:401.00px;top:687px;font-size:12px;">Displaying 14 of 14 rows and 8 of 8 columns</div>
<svg style="position:absolute;left:1176px;top:684px" width="18" height="20" viewBox="0 0 18 20"><path d="M2.5 2.8 H13.5 L9.8 9.2 V17.2 L6.6 16 V9.2 Z M6.6 9.2 H9.8" fill="none" stroke="#d2d2d2" stroke-width="1"/><path d="M12.4 12.4 L15.8 15.8 M15.8 12.4 L12.4 15.8" stroke="#d8d8d8" stroke-width="0.9"/></svg>
<div style="left:1203px;top:86px;width:24px;height:24px;background:#e6e6e6;border:1px solid #cfcfcf;box-sizing:border-box"></div>
<div style="left:1203px;top:116px;width:24px;height:24px;background:#f4f4f4;border:1px solid #a9b1b6;box-sizing:border-box"></div>
<div style="left:1203px;top:146px;width:24px;height:24px;background:#f4f4f4;border:1px solid #a9b1b6;box-sizing:border-box"></div>
<svg style="position:absolute;left:1203px;top:86px" width="24" height="24" viewBox="0 0 24 24"><path d="M4.5 12 H6.5 M18.5 12 H20.5" stroke="#c8c8c8" stroke-width="1"/><rect x="7.8" y="7.5" width="10" height="10" fill="#dadada" stroke="#f2dccc" stroke-width="1"/><text x="12.8" y="16" font-family="Liberation Serif" font-size="10" fill="#e8d8c8" text-anchor="middle">1</text></svg>
<svg style="position:absolute;left:1203px;top:116px" width="24" height="24" viewBox="0 0 24 24"><rect x="5.5" y="6.5" width="12" height="12" fill="#fff"/><rect x="5.5" y="6.5" width="12" height="3" fill="#dde8ee"/><path d="M5.5 6.5 H17.5 V18.5 H5.5 Z M5.5 9.5 H17.5 M5.5 12.5 H17.5 M5.5 15.5 H17.5 M9.5 6.5 V18.5 M13.5 6.5 V18.5" stroke="#d4d8da" stroke-width="1" fill="none"/></svg>
<svg style="position:absolute;left:1203px;top:146px" width="24" height="24" viewBox="0 0 24 24"><path d="M6.5 16.5 C6.5 9 9 6 12 6 C15 6 17.5 9 17.5 16.5" stroke="#d8d8dc" stroke-width="1" fill="#f0f0f4"/><path d="M10 16 V7.5 M12 16 V6.3 M14 16 V7.5" stroke="#dcdce0" stroke-width="0.8"/><rect x="4.5" y="15.5" width="3" height="3" fill="none" stroke="#d0d0d0"/><rect x="16.5" y="15.5" width="3" height="3" fill="none" stroke="#d0d0d0"/></svg>
<div style="left:1080px;top:721px;width:75px;height:24px;background:#e1e1e1;border:1px solid #707070;box-sizing:border-box"></div>
<div class="t" style="left:1109.90px;top:726px;font-size:12px;transform:scaleX(0.9294);transform-origin:0 0;">OK</div>
<div style="left:1161px;top:721px;width:75px;height:24px;background:#e1e1e1;border:1px solid #707070;box-sizing:border-box"></div>
<div class="t" style="left:1181.20px;top:726px;font-size:12px;transform:scaleX(0.9270);transform-origin:0 0;">Cancel</div>
</body></html>
